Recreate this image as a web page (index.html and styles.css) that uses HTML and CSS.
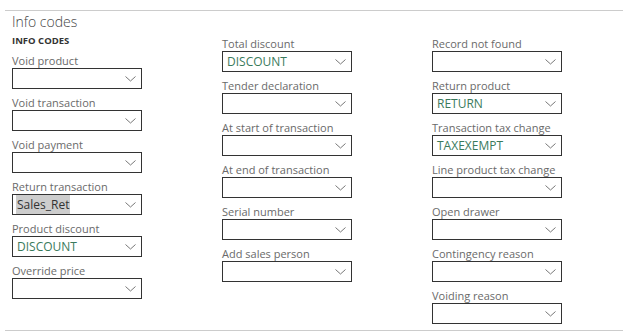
FILE: index.html
```html
<!DOCTYPE html>
<html lang="en">
<head>
    <meta charset="UTF-8">
    <title>Info codes</title>
    <link rel="stylesheet" href="styles.css">
</head>
<body>
    <div class="section">
        <h2 class="section-title">Info codes</h2>
        <div class="columns">
            <div class="column">
                <h3 class="group-title">INFO CODES</h3>
                <div class="field"><label>Void product</label><div class="select"><span class="value"></span><svg class="chevron" viewBox="0 0 11 6"><polyline points="0.5,0.5 5.5,5 10.5,0.5"/></svg></div></div>
                <div class="field"><label>Void transaction</label><div class="select"><span class="value"></span><svg class="chevron" viewBox="0 0 11 6"><polyline points="0.5,0.5 5.5,5 10.5,0.5"/></svg></div></div>
                <div class="field"><label>Void payment</label><div class="select"><span class="value"></span><svg class="chevron" viewBox="0 0 11 6"><polyline points="0.5,0.5 5.5,5 10.5,0.5"/></svg></div></div>
                <div class="field"><label>Return transaction</label><div class="select"><span class="value selected">Sales_Ret</span><svg class="chevron" viewBox="0 0 11 6"><polyline points="0.5,0.5 5.5,5 10.5,0.5"/></svg></div></div>
                <div class="field"><label>Product discount</label><div class="select"><span class="value code">DISCOUNT</span><svg class="chevron" viewBox="0 0 11 6"><polyline points="0.5,0.5 5.5,5 10.5,0.5"/></svg></div></div>
                <div class="field"><label>Override price</label><div class="select"><span class="value"></span><svg class="chevron" viewBox="0 0 11 6"><polyline points="0.5,0.5 5.5,5 10.5,0.5"/></svg></div></div>
            </div>
            <div class="column">
                <div class="field"><label>Total discount</label><div class="select"><span class="value code">DISCOUNT</span><svg class="chevron" viewBox="0 0 11 6"><polyline points="0.5,0.5 5.5,5 10.5,0.5"/></svg></div></div>
                <div class="field"><label>Tender declaration</label><div class="select"><span class="value"></span><svg class="chevron" viewBox="0 0 11 6"><polyline points="0.5,0.5 5.5,5 10.5,0.5"/></svg></div></div>
                <div class="field"><label>At start of transaction</label><div class="select"><span class="value"></span><svg class="chevron" viewBox="0 0 11 6"><polyline points="0.5,0.5 5.5,5 10.5,0.5"/></svg></div></div>
                <div class="field"><label>At end of transaction</label><div class="select"><span class="value"></span><svg class="chevron" viewBox="0 0 11 6"><polyline points="0.5,0.5 5.5,5 10.5,0.5"/></svg></div></div>
                <div class="field"><label>Serial number</label><div class="select"><span class="value"></span><svg class="chevron" viewBox="0 0 11 6"><polyline points="0.5,0.5 5.5,5 10.5,0.5"/></svg></div></div>
                <div class="field"><label>Add sales person</label><div class="select"><span class="value"></span><svg class="chevron" viewBox="0 0 11 6"><polyline points="0.5,0.5 5.5,5 10.5,0.5"/></svg></div></div>
            </div>
            <div class="column">
                <div class="field"><label>Record not found</label><div class="select"><span class="value"></span><svg class="chevron" viewBox="0 0 11 6"><polyline points="0.5,0.5 5.5,5 10.5,0.5"/></svg></div></div>
                <div class="field"><label>Return product</label><div class="select"><span class="value code">RETURN</span><svg class="chevron" viewBox="0 0 11 6"><polyline points="0.5,0.5 5.5,5 10.5,0.5"/></svg></div></div>
                <div class="field"><label>Transaction tax change</label><div class="select"><span class="value code">TAXEXEMPT</span><svg class="chevron" viewBox="0 0 11 6"><polyline points="0.5,0.5 5.5,5 10.5,0.5"/></svg></div></div>
                <div class="field"><label>Line product tax change</label><div class="select"><span class="value"></span><svg class="chevron" viewBox="0 0 11 6"><polyline points="0.5,0.5 5.5,5 10.5,0.5"/></svg></div></div>
                <div class="field"><label>Open drawer</label><div class="select"><span class="value"></span><svg class="chevron" viewBox="0 0 11 6"><polyline points="0.5,0.5 5.5,5 10.5,0.5"/></svg></div></div>
                <div class="field"><label>Contingency reason</label><div class="select"><span class="value"></span><svg class="chevron" viewBox="0 0 11 6"><polyline points="0.5,0.5 5.5,5 10.5,0.5"/></svg></div></div>
                <div class="field"><label>Voiding reason</label><div class="select"><span class="value"></span><svg class="chevron" viewBox="0 0 11 6"><polyline points="0.5,0.5 5.5,5 10.5,0.5"/></svg></div></div>
            </div>
        </div>
    </div>
</body>
</html>
```

FILE: styles.css
```css
body {
    margin: 0;
    background-color: #fff;
    font-family: "Open Sans", Arial, sans-serif;
    color: #555;
}
.section {
    margin: 10px 0 0 5px;
    border-top: 1px solid #ccc;
    border-bottom: 1px solid #ccc;
    height: 321px;
    box-sizing: border-box;
    padding: 0 0 0 7px;
}
.section-title {
    margin: 0;
    height: 23px;
    line-height: 21px;
    font-size: 14px;
    font-weight: 300;
    color: #444;
}
.columns {
    display: grid;
    grid-template-columns: 210px 210px 130px;
}
.column {
    display: flex;
    flex-direction: column;
    gap: 4px;
}
.group-title {
    margin: 0;
    height: 13px;
    line-height: 14px;
    font-size: 9.5px;
    font-weight: bold;
    color: #333;
}
.field label {
    display: block;
    height: 17px;
    line-height: 20px;
    font-size: 11px;
    color: #6a6a6a;
    white-space: nowrap;
}
.select {
    display: flex;
    align-items: center;
    justify-content: space-between;
    width: 130px;
    height: 21px;
    box-sizing: border-box;
    border: 1px solid #333;
    padding: 0 4px 0 3px;
}
.value {
    font-size: 12px;
    line-height: 19px;
    color: #333;
}
.value.code {
    color: #3a7a5c;
    padding-left: 1px;
}
.value.selected {
    background-color: #cdcdcd;
    padding: 0 1px;
}
.chevron {
    width: 11px;
    height: 6px;
    margin-right: 1px;
    fill: none;
    stroke: #777;
    stroke-width: 1;
}
```
